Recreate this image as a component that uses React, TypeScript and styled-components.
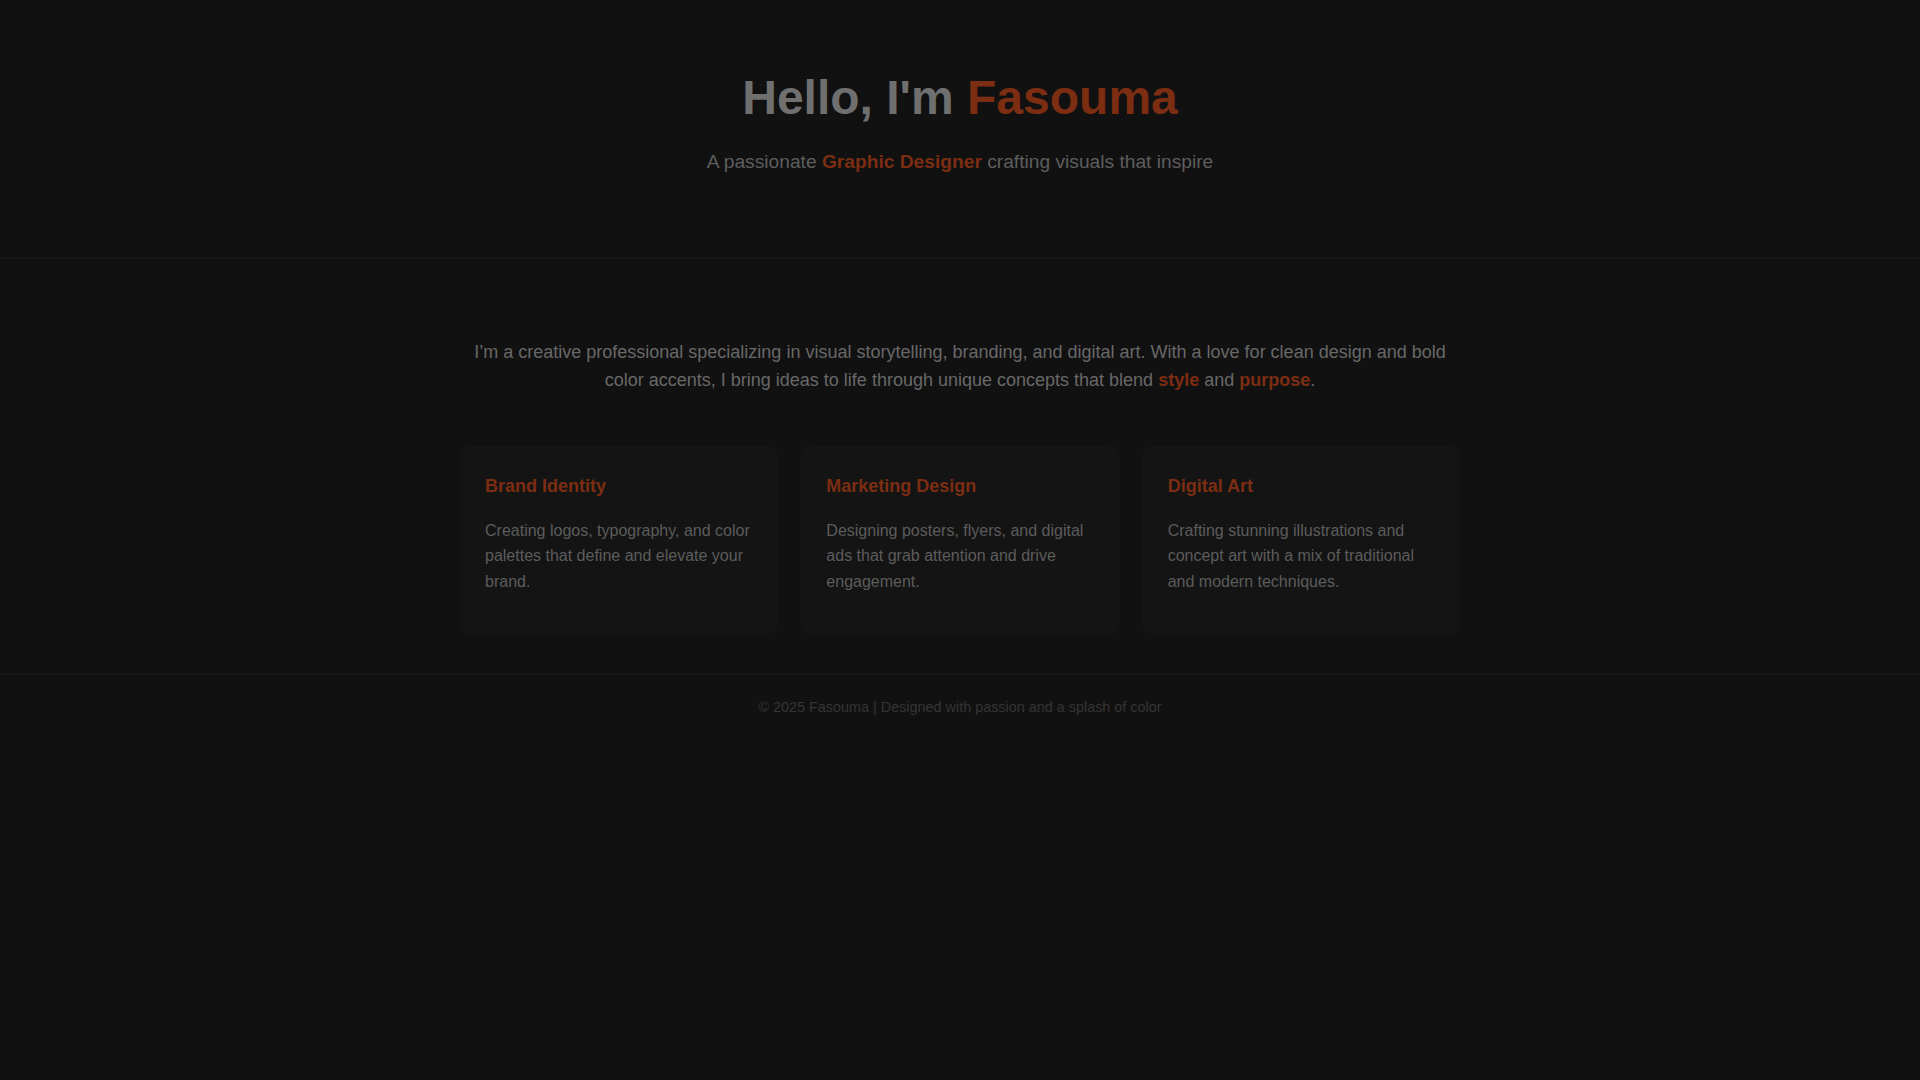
import React from "react";
import styled, { createGlobalStyle } from "styled-components";

const GlobalStyle = createGlobalStyle`
  html, body {
    margin: 0;
    padding: 0;
    background: #111111;
  }
  body {
    font-family: "Liberation Sans", Arial, sans-serif;
    color: #6a6a6a;
    min-height: 100vh;
  }
  * { box-sizing: border-box; }
`;

const Page = styled.div`
  min-height: 100vh;
  background: #111111;
`;

const Header = styled.header`
  padding: 70px 20px 85px;
  text-align: center;
  border-bottom: 1px solid #1b1b1b;
`;

const Title = styled.h1`
  margin: 0 0 26px;
  font-size: 48px;
  line-height: 55px;
  font-weight: 700;
  color: #6f6f6f;
`;

const Accent = styled.span`
  color: #7c2d12;
  font-weight: 700;
`;

const Subtitle = styled.p`
  margin: 0;
  font-size: 19.2px;
  line-height: 22px;
  color: #5e5e5e;
`;

const Main = styled.main`
  max-width: 1000px;
  margin: 0 auto;
  padding: 79px 0 39px;
`;

const Intro = styled.p`
  margin: 0 0 51px;
  font-size: 18px;
  line-height: 28.3px;
  text-align: center;
  color: #686868;
`;

const Cards = styled.div`
  display: grid;
  grid-template-columns: repeat(3, 1fr);
  gap: 24px;
`;

const Card = styled.div`
  background: #141414;
  border: 1px solid #151515;
  border-radius: 10px;
  padding: 28px 24px 24px;
`;

const CardTitle = styled.h3`
  margin: 0 0 21px;
  font-size: 18px;
  line-height: 22px;
  font-weight: 700;
  color: #7c2d12;
`;

const CardText = styled.p`
  margin: 0 0 16px;
  font-size: 16px;
  line-height: 25.6px;
  color: #5c5c5c;
`;

const Footer = styled.footer`
  border-top: 1px solid #1b1b1b;
  padding: 22px 20px 30px;
  text-align: center;
  font-size: 14.4px;
  line-height: 20px;
  color: #353535;
`;

const services = [
  {
    title: "Brand Identity",
    text: "Creating logos, typography, and color palettes that define and elevate your brand.",
  },
  {
    title: "Marketing Design",
    text: "Designing posters, flyers, and digital ads that grab attention and drive engagement.",
  },
  {
    title: "Digital Art",
    text: "Crafting stunning illustrations and concept art with a mix of traditional and modern techniques.",
  },
];

export default function App() {
  return (
    <Page>
      <GlobalStyle />
      <Header>
        <Title>
          Hello, I'm <Accent>Fasouma</Accent>
        </Title>
        <Subtitle>
          A passionate <Accent>Graphic Designer</Accent> crafting visuals that inspire
        </Subtitle>
      </Header>
      <Main>
        <Intro>
          I’m a creative professional specializing in visual storytelling, branding, and digital art. With a love
          for clean design and bold color accents, I bring ideas to life through unique concepts that blend{" "}
          <Accent>style</Accent> and <Accent>purpose</Accent>.
        </Intro>
        <Cards>
          {services.map((s) => (
            <Card key={s.title}>
              <CardTitle>{s.title}</CardTitle>
              <CardText>{s.text}</CardText>
            </Card>
          ))}
        </Cards>
      </Main>
      <Footer>© 2025 Fasouma | Designed with passion and a splash of color</Footer>
    </Page>
  );
}
